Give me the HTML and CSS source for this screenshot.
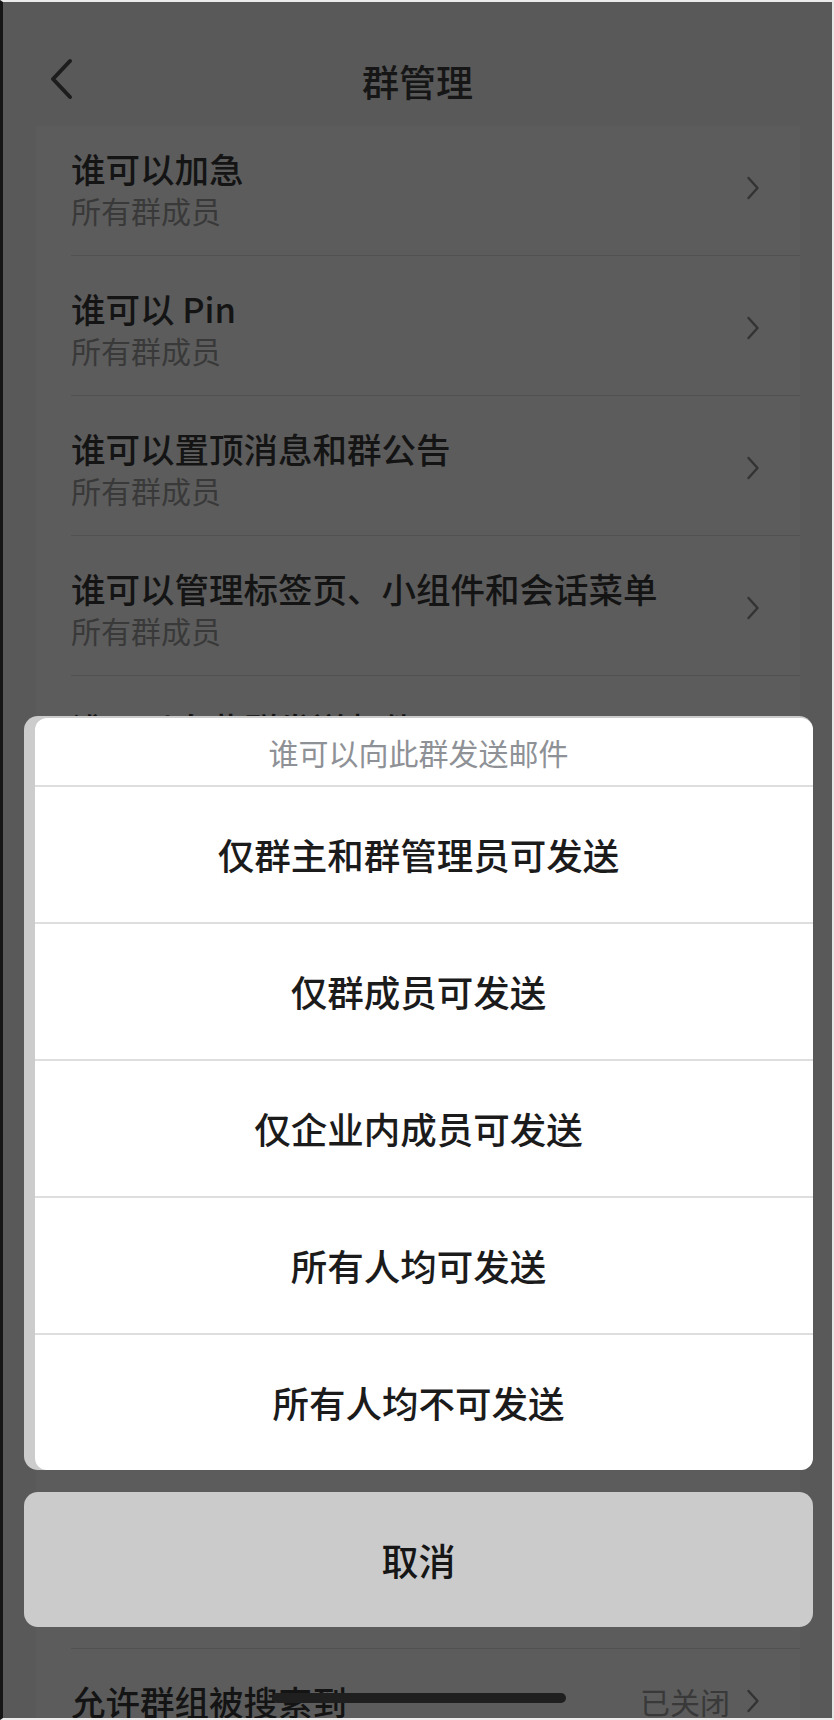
FILE: index.html
```html
<!DOCTYPE html>
<html lang="zh-CN">
<head>
<meta charset="utf-8">
<title>群管理</title>
<link rel="stylesheet" href="styles.css">
</head>
<body>
<div class="screen">
  <header class="navbar">
    <span class="nav-back">
      <svg class="back-icon" width="24" height="42" viewBox="0 0 24 42"><path d="M21 3 L4 21 L21 39" fill="none" stroke="currentColor" stroke-width="4" stroke-linecap="round" stroke-linejoin="round"/></svg>
    </span>
    <h1 class="nav-title">群管理</h1>
    <span class="nav-spacer"></span>
  </header>

  <main class="card">
    <div class="row row--first"><div class="row-inner">
      <div class="row-text"><div class="row-title">谁可以加急</div><div class="row-sub">所有群成员</div></div>
      <svg class="chev" width="14" height="24" viewBox="0 0 14 24"><path d="M2.5 2 L11.5 12 L2.5 22" fill="none" stroke="currentColor" stroke-width="2.4" stroke-linecap="round" stroke-linejoin="round"/></svg>
    </div></div>
    <div class="row"><div class="row-inner">
      <div class="row-text"><div class="row-title">谁可以 Pin</div><div class="row-sub">所有群成员</div></div>
      <svg class="chev" width="14" height="24" viewBox="0 0 14 24"><path d="M2.5 2 L11.5 12 L2.5 22" fill="none" stroke="currentColor" stroke-width="2.4" stroke-linecap="round" stroke-linejoin="round"/></svg>
    </div></div>
    <div class="row"><div class="row-inner">
      <div class="row-text"><div class="row-title">谁可以置顶消息和群公告</div><div class="row-sub">所有群成员</div></div>
      <svg class="chev" width="14" height="24" viewBox="0 0 14 24"><path d="M2.5 2 L11.5 12 L2.5 22" fill="none" stroke="currentColor" stroke-width="2.4" stroke-linecap="round" stroke-linejoin="round"/></svg>
    </div></div>
    <div class="row"><div class="row-inner">
      <div class="row-text"><div class="row-title">谁可以管理标签页、小组件和会话菜单</div><div class="row-sub">所有群成员</div></div>
      <svg class="chev" width="14" height="24" viewBox="0 0 14 24"><path d="M2.5 2 L11.5 12 L2.5 22" fill="none" stroke="currentColor" stroke-width="2.4" stroke-linecap="round" stroke-linejoin="round"/></svg>
    </div></div>
    <div class="row"><div class="row-inner">
      <div class="row-text"><div class="row-title">谁可以向此群发送邮件</div><div class="row-sub">所有人均可发送</div></div>
      <svg class="chev" width="14" height="24" viewBox="0 0 14 24"><path d="M2.5 2 L11.5 12 L2.5 22" fill="none" stroke="currentColor" stroke-width="2.4" stroke-linecap="round" stroke-linejoin="round"/></svg>
    </div></div>
    <div class="row"><div class="row-inner">
      <div class="row-text"><div class="row-title">谁可以添加群成员</div><div class="row-sub">所有群成员</div></div>
      <svg class="chev" width="14" height="24" viewBox="0 0 14 24"><path d="M2.5 2 L11.5 12 L2.5 22" fill="none" stroke="currentColor" stroke-width="2.4" stroke-linecap="round" stroke-linejoin="round"/></svg>
    </div></div>
    <div class="row"><div class="row-inner">
      <div class="row-text"><div class="row-title">谁可以编辑群信息</div><div class="row-sub">所有群成员</div></div>
      <svg class="chev" width="14" height="24" viewBox="0 0 14 24"><path d="M2.5 2 L11.5 12 L2.5 22" fill="none" stroke="currentColor" stroke-width="2.4" stroke-linecap="round" stroke-linejoin="round"/></svg>
    </div></div>
    <div class="row"><div class="row-inner">
      <div class="row-text"><div class="row-title">谁可以在群内发言</div><div class="row-sub">所有群成员</div></div>
      <svg class="chev" width="14" height="24" viewBox="0 0 14 24"><path d="M2.5 2 L11.5 12 L2.5 22" fill="none" stroke="currentColor" stroke-width="2.4" stroke-linecap="round" stroke-linejoin="round"/></svg>
    </div></div>
    <div class="row"><div class="row-inner">
      <div class="row-text"><div class="row-title">谁可以发起视频会议</div><div class="row-sub">所有群成员</div></div>
      <svg class="chev" width="14" height="24" viewBox="0 0 14 24"><path d="M2.5 2 L11.5 12 L2.5 22" fill="none" stroke="currentColor" stroke-width="2.4" stroke-linecap="round" stroke-linejoin="round"/></svg>
    </div></div>
    <div class="row row--single"><div class="row-inner">
      <div class="row-text"><div class="row-title">新成员可查看历史消息</div></div>
      <svg class="chev" width="14" height="24" viewBox="0 0 14 24"><path d="M2.5 2 L11.5 12 L2.5 22" fill="none" stroke="currentColor" stroke-width="2.4" stroke-linecap="round" stroke-linejoin="round"/></svg>
    </div></div>
    <div class="row"><div class="row-inner">
      <div class="row-text"><div class="row-title">谁可以查看群成员列表</div><div class="row-sub">所有群成员</div></div>
      <svg class="chev" width="14" height="24" viewBox="0 0 14 24"><path d="M2.5 2 L11.5 12 L2.5 22" fill="none" stroke="currentColor" stroke-width="2.4" stroke-linecap="round" stroke-linejoin="round"/></svg>
    </div></div>
    <div class="row row--value"><div class="row-inner">
      <div class="row-text"><div class="row-title">允许群组被搜索到</div></div>
      <span class="row-value">已关闭</span>
      <svg class="chev" width="14" height="24" viewBox="0 0 14 24"><path d="M2.5 2 L11.5 12 L2.5 22" fill="none" stroke="currentColor" stroke-width="2.4" stroke-linecap="round" stroke-linejoin="round"/></svg>
    </div></div>
  </main>

  <div class="action-sheet">
    <div class="sheet">
      <div class="sheet-panel">
        <div class="sheet-header">谁可以向此群发送邮件</div>
        <div class="sheet-option">仅群主和群管理员可发送</div>
        <div class="sheet-option">仅群成员可发送</div>
        <div class="sheet-option">仅企业内成员可发送</div>
        <div class="sheet-option">所有人均可发送</div>
        <div class="sheet-option">所有人均不可发送</div>
      </div>
    </div>
    <div class="sheet-cancel">取消</div>
  </div>

  <div class="home-indicator"></div>
</div>
</body>
</html>
```

FILE: styles.css
```css
* { box-sizing: border-box; }

html, body {
  margin: 0;
  padding: 0;
  background: #595959;
}

body {
  font-family: "Noto Sans CJK SC", "Noto Sans", sans-serif;
}

.screen {
  position: relative;
  width: 834px;
  height: 1720px;
  overflow: hidden;
  background: #595959;
  border-top: 2px solid #ececec;
  border-right: 2px solid #e6e6e6;
  border-bottom: 2px solid #ececec;
  border-left: 3px solid #161616;
}

/* nav bar */
.navbar {
  height: 124px;
  padding-top: 34px;
  display: grid;
  grid-template-columns: 1fr auto 1fr;
  align-items: center;
}

.nav-back {
  display: flex;
  align-items: center;
  padding-left: 46px;
  color: #1d1d1d;
}

.back-icon {
  display: block;
  margin-bottom: 4px;
}

.nav-title {
  margin: 0;
  font-size: 37px;
  line-height: 90px;
  font-weight: 500;
  color: #161616;
}

/* list card */
.card {
  margin: 0 32px 0 33px;
  background: #5c5c5c;
}

.row {
  padding-left: 35px;
}

.row-inner {
  display: flex;
  align-items: center;
  height: 140px;
  padding: 30px 40px 25px 0;
  border-bottom: 1px solid #515151;
}

.row--first .row-inner {
  height: 130px;
  padding-top: 20px;
}

.row--single .row-inner {
  height: 133px;
  padding-top: 44px;
  padding-bottom: 44px;
}

.row--value .row-inner {
  border-bottom: none;
  padding-bottom: 30px;
  height: auto;
}

.row-text {
  flex: 1;
  min-width: 0;
}

.row-title {
  font-size: 34.5px;
  line-height: 44px;
  font-weight: 500;
  color: #141414;
  white-space: nowrap;
}

.row-sub {
  font-size: 30px;
  line-height: 40px;
  color: #393939;
  white-space: nowrap;
}

.row-value {
  font-size: 30px;
  line-height: 40px;
  color: #393939;
  margin-right: 16px;
}

.chev {
  display: block;
  flex: none;
  color: #333333;
}

/* action sheet */
.action-sheet {
  position: absolute;
  left: 21px;
  top: 714px;
  width: 789px;
  display: flex;
  flex-direction: column;
  gap: 22px;
}

.sheet {
  background: #cccccc;
  border-radius: 14px;
  padding: 2px 0 0 11px;
}

.sheet-panel {
  background: #ffffff;
  border-radius: 12px;
  overflow: hidden;
}

.sheet-header {
  height: 67px;
  padding-right: 11px;
  display: flex;
  align-items: center;
  justify-content: center;
  font-size: 30px;
  color: #8e9196;
}

.sheet-option {
  height: 137px;
  padding-right: 11px;
  border-top: 2px solid #dedede;
  display: flex;
  align-items: center;
  justify-content: center;
  font-size: 36.5px;
  font-weight: 500;
  color: #1b1b1c;
}

.sheet-cancel {
  height: 135px;
  border-radius: 14px;
  background: #cbcbcb;
  display: flex;
  align-items: center;
  justify-content: center;
  font-size: 37px;
  font-weight: 500;
  color: #161616;
}

.home-indicator {
  position: absolute;
  left: 269px;
  bottom: 15px;
  width: 294px;
  height: 10px;
  border-radius: 5px;
  background: #1f1f1f;
}
```
